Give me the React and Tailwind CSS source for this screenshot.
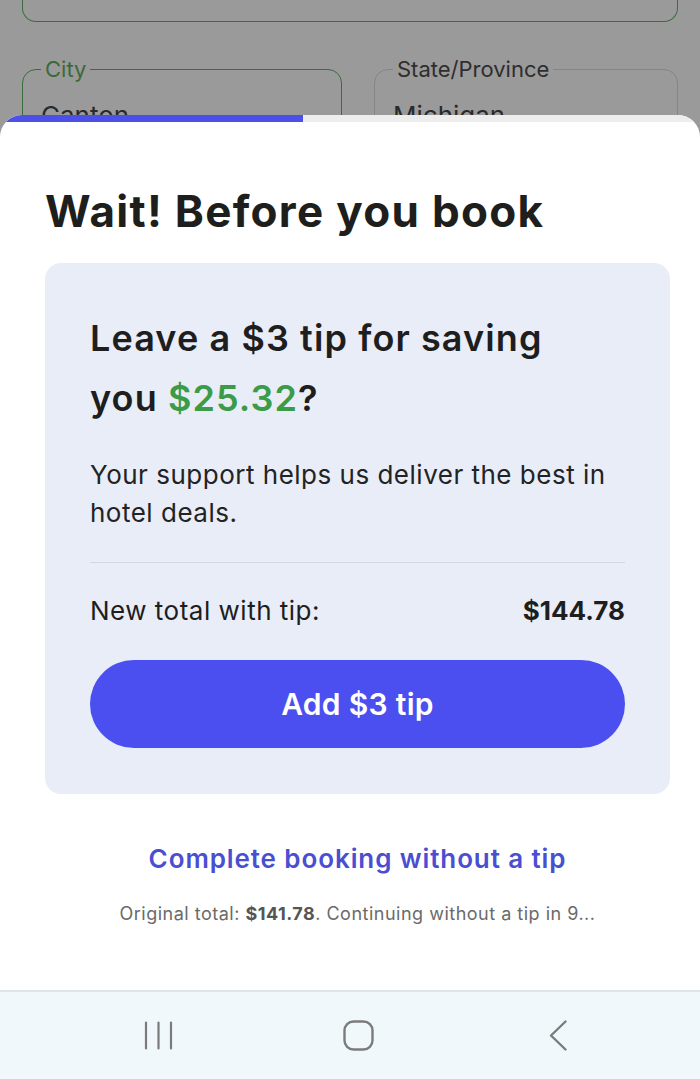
import React from "react";

const font = { fontFamily: "Inter, 'Noto Sans', sans-serif" };

export default function App() {
  return (
    <div className="w-[700px] h-[1079px] flex flex-col bg-[#9a9a9a] overflow-hidden" style={font}>
      {/* dimmed form behind the sheet */}
      <div className="h-[115px] shrink-0 overflow-hidden px-[22px] flex flex-col">
        <div className="h-[22px] shrink-0 border-x border-b border-[#3d6b3d] rounded-b-[14px]" />
        <div className="mt-[34px] shrink-0 flex gap-[32px]">
          <fieldset className="w-[320px] h-[90px] border border-[#3d6b3d] rounded-[14px] pl-[18px] pr-4">
            <legend className="px-[4px] text-[22px] leading-[26px] text-[#3a6a3a]">City</legend>
            <div className="mt-[19px] text-[26px] leading-[30px] text-[#2a2a2a]">Canton</div>
          </fieldset>
          <fieldset className="flex-1 h-[90px] border border-[#858585] rounded-[14px] pl-[18px] pr-4">
            <legend className="px-[4px] text-[22px] leading-[26px] text-[#2e2e2e]">State/Province</legend>
            <div className="mt-[19px] text-[26px] leading-[30px] text-[#2a2a2a]">Michigan</div>
          </fieldset>
        </div>
      </div>

      {/* bottom sheet */}
      <div className="flex-1 bg-white rounded-t-[22px] overflow-hidden flex flex-col">
        <div className="h-[7px] w-full shrink-0 bg-[#ededed] flex">
          <div className="w-[303px] bg-[#4d50e6]" />
        </div>
        <div className="px-[45px] pt-[63px]">
          <h1 className="text-[44px] leading-[52px] font-bold text-[#1e1e1c] tracking-[1.3px]">Wait! Before you book</h1>
        </div>
        <div className="ml-[45px] mr-[30px] mt-[26px] rounded-[16px] bg-[#e8edf8] px-[45px] pt-[45px] pb-[46px]">
          <h2 className="text-[36px] leading-[60px] font-semibold text-[#1e1e1e] tracking-[1.1px]">
            Leave a $3 tip for saving<br />you <span className="text-[#3a9b48]">$25.32</span>?
          </h2>
          <p className="mt-[28px] text-[26px] leading-[38px] text-[#232323] tracking-[0.5px]">
            Your support helps us deliver the best in hotel deals.
          </p>
          <div className="mt-[30px] h-px bg-[#d3d8e0]" />
          <div className="mt-[30px] flex items-center justify-between text-[26px] leading-[36px] text-[#1e1e1e]">
            <span className="tracking-[0.5px]">New total with tip:</span>
            <span className="font-bold">$144.78</span>
          </div>
          <button className="mt-[31px] w-full h-[88px] rounded-full bg-[#4b4ff0] text-white text-[30px] font-semibold tracking-[0.3px]">
            Add $3 tip
          </button>
        </div>
        <div className="ml-[45px] mr-[30px] mt-[48px] text-center text-[26px] leading-[34px] font-semibold text-[#4a4fd2] tracking-[0.9px]">
          Complete booking without a tip
        </div>
        <div className="ml-[45px] mr-[30px] mt-[25px] text-center text-[18px] leading-[26px] text-[#6a6a6a] tracking-[0.5px]">
          Original total: <span className="font-bold text-[#555]">$141.78</span>. Continuing without a tip in 9...
        </div>
      </div>

      {/* system nav bar */}
      <div className="h-[89px] shrink-0 bg-[#f1f8fc] border-t-2 border-[#dfe5e8] flex items-center pl-[58px]">
        <div className="w-[200px] flex justify-center">
          <svg width="29" height="29" viewBox="0 0 29 29" fill="none" stroke="#7b7b7b" strokeWidth="2.2" strokeLinecap="round">
            <path d="M2 1.5v26M14.5 1.5v26M27 1.5v26" />
          </svg>
        </div>
        <div className="w-[200px] flex justify-center">
          <svg width="31" height="31" viewBox="0 0 31 31" fill="none" stroke="#7b7b7b" strokeWidth="2.4">
            <rect x="1.5" y="1.5" width="28" height="28" rx="9" />
          </svg>
        </div>
        <div className="w-[200px] flex justify-center">
          <svg width="20" height="31" viewBox="0 0 20 31" fill="none" stroke="#7b7b7b" strokeWidth="2.4" strokeLinecap="round" strokeLinejoin="round">
            <path d="M17.5 1.5L3 15.5l14.5 14" />
          </svg>
        </div>
      </div>
    </div>
  );
}
